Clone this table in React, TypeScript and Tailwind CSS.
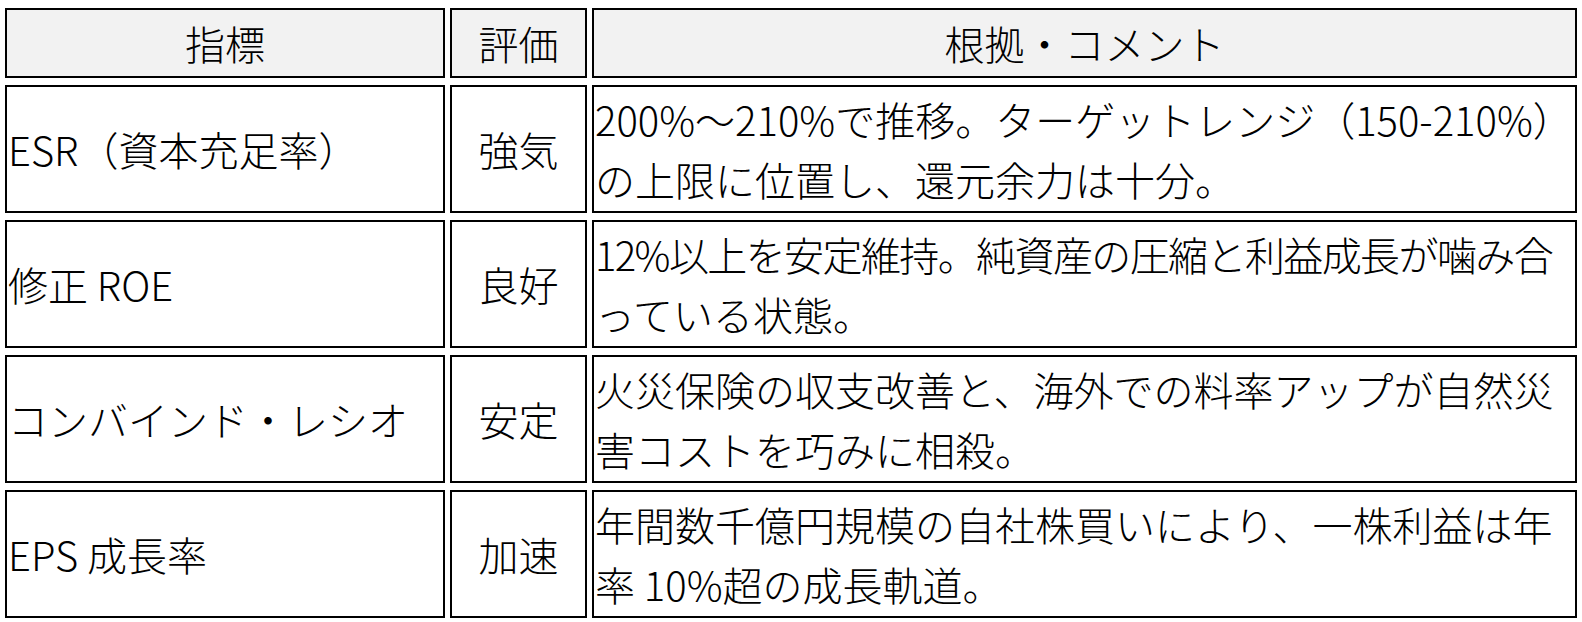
const rows = [
  {
    metric: 'ESR（資本充足率）',
    rating: '強気',
    lines: ['200%～210%で推移。ターゲットレンジ（150-210%）', 'の上限に位置し、還元余力は十分。'],
  },
  {
    metric: '修正 ROE',
    rating: '良好',
    lines: ['12%以上を安定維持。純資産の圧縮と利益成長が噛み合', 'っている状態。'],
    tight: true,
  },
  {
    metric: 'コンバインド・レシオ',
    rating: '安定',
    lines: ['火災保険の収支改善と、海外での料率アップが自然災', '害コストを巧みに相殺。'],
  },
  {
    metric: 'EPS 成長率',
    rating: '加速',
    lines: ['年間数千億円規模の自社株買いにより、一株利益は年', '率 10%超の成長軌道。'],
  },
];

export default function App() {
  return (
    <div className="h-[622px] w-[1582px] overflow-hidden bg-white pt-px">
      <table className="w-[1582px] table-fixed border-separate border-spacing-x-[5px] border-spacing-y-[7px] font-['Noto_Sans_CJK_JP',sans-serif] text-[40px] font-light leading-[60px] text-black">
        <colgroup>
          <col className="w-[440px]" />
          <col className="w-[137px]" />
          <col className="w-[985px]" />
        </colgroup>
        <thead>
          <tr>
            <th className="border-2 border-black bg-[#f2f2f2] px-[3px] py-[3px] text-center font-light">
              指標
            </th>
            <th className="border-2 border-black bg-[#f2f2f2] px-[3px] py-[3px] text-center font-light">
              評価
            </th>
            <th className="border-2 border-black bg-[#f2f2f2] px-[3px] py-[3px] text-center font-light">
              根拠・コメント
            </th>
          </tr>
        </thead>
        <tbody>
          {rows.map((row) => (
            <tr key={row.metric}>
              <td className="whitespace-nowrap border-2 border-black px-[1px] py-[2px] text-left align-middle">
                {row.metric}
              </td>
              <td className="border-2 border-black px-[3px] py-[2px] text-center align-middle">
                {row.rating}
              </td>
              <td className="border-2 border-black px-[1px] py-[2px] text-left align-middle">
                {row.lines.map((line, i) => (
                  <span
                    key={line}
                    className={
                      row.tight && i === 0
                        ? 'block whitespace-nowrap tracking-[-0.04em]'
                        : 'block whitespace-nowrap'
                    }
                  >
                    {line}
                  </span>
                ))}
              </td>
            </tr>
          ))}
        </tbody>
      </table>
    </div>
  );
}
